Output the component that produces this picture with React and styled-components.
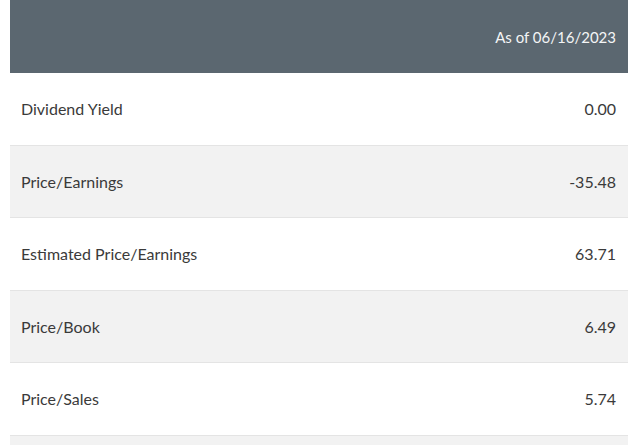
import React from 'react'
import styled, { createGlobalStyle } from 'styled-components'

const Global = createGlobalStyle`
  body {
    margin: 0;
    background: #ffffff;
    font-family: Lato, "Open Sans", sans-serif;
  }
`

const Table = styled.div`
  margin: 0 12px 0 10px;
  display: flex;
  flex-direction: column;
  height: 445px;
  overflow: hidden;
`

const Header = styled.div`
  flex: none;
  height: 73px;
  background: #5b6770;
  display: flex;
  align-items: center;
  justify-content: flex-end;
  padding: 0 12px 0 11px;
  box-sizing: border-box;
  color: #f4f5f6;
  font-size: 15px;
`

const Row = styled.div`
  flex: none;
  height: 72.5px;
  box-sizing: border-box;
  display: flex;
  align-items: center;
  justify-content: space-between;
  padding: 0 12px 0 11px;
  background: ${p => (p.$shaded ? '#f2f2f2' : '#ffffff')};
  border-bottom: 1px solid #e4e4e4;
  color: #3a3a3a;
  font-size: 16px;
`

const Label = styled.span``

const Value = styled.span``

const rows = [
  ['Dividend Yield', '0.00'],
  ['Price/Earnings', '-35.48'],
  ['Estimated Price/Earnings', '63.71'],
  ['Price/Book', '6.49'],
  ['Price/Sales', '5.74'],
  ['', ''],
]

export default function App() {
  return (
    <>
      <Global />
      <Table>
        <Header>As of 06/16/2023</Header>
        {rows.map(([label, value], i) => (
          <Row key={i} $shaded={i % 2 === 1}>
            <Label>{label}</Label>
            <Value>{value}</Value>
          </Row>
        ))}
      </Table>
    </>
  )
}
